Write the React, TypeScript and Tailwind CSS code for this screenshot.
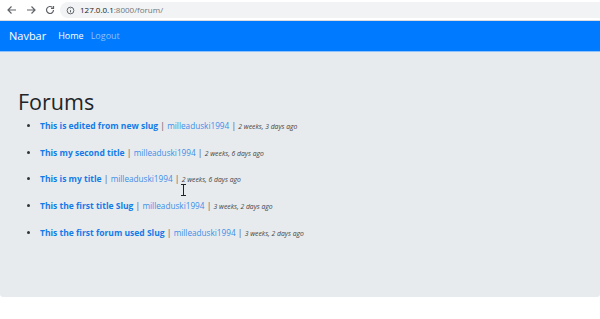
import React from 'react';

const forums = [
  { title: 'This is edited from new slug', author: 'milleaduski1994', ago: '2 weeks, 3 days ago' },
  { title: 'This my second title', author: 'milleaduski1994', ago: '2 weeks, 6 days ago' },
  { title: 'This is my title', author: 'milleaduski1994', ago: '2 weeks, 6 days ago' },
  { title: 'This the first title Slug', author: 'milleaduski1994', ago: '3 weeks, 2 days ago' },
  { title: 'This the first forum used Slug', author: 'milleaduski1994', ago: '3 weeks, 2 days ago' },
];

function BrowserBar() {
  return (
    <div className="h-[21px] bg-white flex items-center border-b border-[#dadce0]">
      <div className="flex items-center gap-[7px] pl-[6px] w-[60px] text-[#5f6368]">
        <svg width="12" height="12" viewBox="0 0 24 24" fill="none" stroke="currentColor" strokeWidth="2.4">
          <path d="M20 12H5M11 5l-7 7 7 7" />
        </svg>
        <svg width="12" height="12" viewBox="0 0 24 24" fill="none" stroke="currentColor" strokeWidth="2.4">
          <path d="M4 12h15M13 5l7 7-7 7" />
        </svg>
        <svg width="12" height="12" viewBox="0 0 24 24" fill="none" stroke="currentColor" strokeWidth="2.4">
          <path d="M19 12a7 7 0 1 1-2.05-4.95" />
          <path d="M19 4v5h-5" />
        </svg>
      </div>
      <div className="flex-1 h-[16px] bg-[#f1f3f4] rounded-l-full flex items-center pl-[6px] gap-[5px]">
        <svg width="9" height="9" viewBox="0 0 24 24" fill="none" stroke="#5f6368" strokeWidth="2.6">
          <circle cx="12" cy="12" r="9" />
          <path d="M12 11v6M12 7v1" />
        </svg>
        <span className="text-[8px] leading-none text-[#202124]">
          127.0.0.1<span className="text-[#70757a]">:8000/forum/</span>
        </span>
      </div>
    </div>
  );
}

export default function App() {
  return (
    <div className="w-[600px] h-[319px] bg-white overflow-hidden" style={{ fontFamily: '"Open Sans", "Noto Sans", sans-serif' }}>
      <BrowserBar />
      <nav className="h-[31px] bg-[#007bff] flex items-center px-[9px] border-b border-[#8fc3fb]">
        <span className="text-white text-[11px] mr-[12px]">Navbar</span>
        <span className="text-white text-[9px] mr-[7px]">Home</span>
        <span className="text-[#8ec2fa] text-[9px]">Logout</span>
      </nav>
      <div className="relative h-[245px] bg-[#e8ebee] rounded-b-[3px] pt-[36px] px-[18px]">
        <h1 className="text-[21.5px] font-medium leading-[28px] text-[#212529] mb-[4px]">Forums</h1>
        <ul className="list-disc pl-[22px] text-[8.5px] text-[#333]">
          {forums.map((f) => (
            <li key={f.title} className="h-[26.7px] leading-[12px]">
              <span className="font-bold text-[#127be8]">{f.title}</span>
              <span className="text-[#555]"> | </span>
              <span className="text-[#3a8ee9] text-[8.2px]">{f.author}</span>
              <span className="text-[#555]"> | </span>
              <span className="italic text-[6.8px] text-[#444]">{f.ago}</span>
            </li>
          ))}
        </ul>
        <svg className="absolute left-[180px] top-[132px]" width="7" height="12" viewBox="0 0 7 12" fill="none" stroke="#222" strokeWidth="1">
          <path d="M1 0.5h5M3.5 0.5v11M1 11.5h5" />
        </svg>
      </div>
    </div>
  );
}
